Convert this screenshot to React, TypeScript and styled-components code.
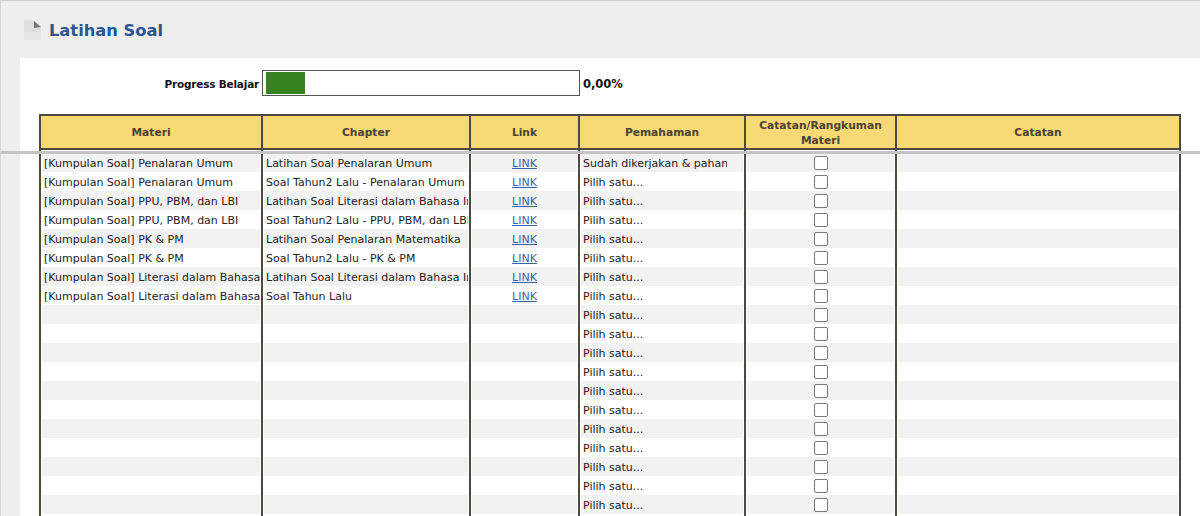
import styled, { createGlobalStyle } from "styled-components";

const GlobalStyle = createGlobalStyle`
  html, body {
    margin: 0;
    padding: 0;
    height: 516px;
    overflow: hidden;
    background: #eeeeee;
  }
`;

const font = `"DejaVu Sans", "Noto Sans", sans-serif`;

const Page = styled.div`
  position: relative;
  width: 1200px;
  height: 516px;
  overflow: hidden;
  box-sizing: border-box;
  background: #eeeeee;
  border-top: 1px solid #cfcfcf;
  border-left: 1px solid #d6d6d6;
  font-family: ${font};
  color: #222;
`;

const TitleBar = styled.div`
  height: 57px;
  box-sizing: border-box;
  padding: 18px 0 0 23px;
  display: flex;
  align-items: flex-start;
  gap: 8px;
`;

const Title = styled.h1`
  margin: 0;
  font-size: 16.3px;
  line-height: 24px;
  font-weight: 700;
  color: #2f5391;
`;

const Panel = styled.div`
  margin-left: 19px;
  background: #ffffff;
  padding: 12px 20px 0 19px;
  height: 500px;
`;

const ProgressRow = styled.div`
  display: flex;
  align-items: center;
  height: 26px;
  margin-bottom: 18px;
`;

const ProgressLabel = styled.div`
  width: 220px;
  padding-top: 2px;
  text-align: right;
  font-size: 10.5px;
  letter-spacing: -0.2px;
  font-weight: 700;
  color: #111;
  margin-right: 3px;
`;

const ProgressTrack = styled.div`
  width: 318px;
  height: 26px;
  box-sizing: border-box;
  border: 1px solid #555;
  padding: 1px 3px;
  background: #fff;
`;

const ProgressFill = styled.div`
  height: 100%;
  background: #38821f;
`;

const ProgressValue = styled.div`
  margin-left: 3px;
  padding-top: 2px;
  font-size: 11.5px;
  font-weight: 700;
  color: #111;
`;

const Table = styled.table`
  width: 1140px;
  table-layout: fixed;
  border-collapse: collapse;
  font-size: 11px;
`;

const Th = styled.th`
  height: 31px;
  padding: 1px 2px 0;
  background: #f9d976;
  border: 2px solid #4f4a40;
  color: #4a4335;
  font-size: 10.7px;
  line-height: 15px;
  font-weight: 700;
  text-align: center;
`;

const Row = styled.tr<{ $shaded: boolean }>`
  height: 19px;
  td {
    background: ${({ $shaded }) => ($shaded ? "#f2f2f2" : "#ffffff")};
  }
`;

const Td = styled.td<{ $center?: boolean }>`
  height: 19px;
  padding: 0 0 0 ${({ $center }) => ($center ? 0 : 3)}px;
  border-left: 2px solid #4f4a40;
  border-right: 2px solid #4f4a40;
  box-shadow: inset 1px 0 0 #fff, inset -1px 0 0 #fff;
  text-align: ${({ $center }) => ($center ? "center" : "left")};
  white-space: nowrap;
  overflow: hidden;
  line-height: 19px;
`;

// white gap between the header and the first row
const Spacer = styled.td`
  height: 3px;
  padding: 0;
  border-left: 2px solid #4f4a40;
  border-right: 2px solid #4f4a40;
`;

const Clip = styled.div<{ $width: number }>`
  width: ${({ $width }) => $width}px;
  overflow: hidden;
  position: relative;
  top: 1px;
`;

const LinkText = styled.a`
  color: #3a5fb0;
  text-decoration: underline;
  position: relative;
  top: 1px;
`;

const CheckBox = styled.span`
  display: block;
  width: 14px;
  height: 14px;
  box-sizing: border-box;
  margin: 0 auto;
  border: 1.5px solid #7a7a7a;
  border-radius: 2px;
  background: #fff;
`;

// grey line of the sticky header, lies over the table
const StickyLine = styled.div`
  position: absolute;
  left: -1px;
  right: 0;
  top: 150px;
  height: 3px;
  background: #c4c4c4;
`;

const DocIcon = () => (
  <svg width="17" height="20" viewBox="0 0 17 20" style={{ marginTop: 1 }}>
    <path d="M0 0h10l1 6h6v14H0z" fill="#dedede" />
    <path d="M10 1l7 6-7 1z" fill="#777777" />
    <path d="M0 12h17v8H0z" fill="#e6e6e6" />
  </svg>
);

const rows = [
  ["[Kumpulan Soal] Penalaran Umum", "Latihan Soal Penalaran Umum", "Sudah dikerjakan & paham"],
  ["[Kumpulan Soal] Penalaran Umum", "Soal Tahun2 Lalu - Penalaran Umum"],
  ["[Kumpulan Soal] PPU, PBM, dan LBI", "Latihan Soal Literasi dalam Bahasa Indonesia"],
  ["[Kumpulan Soal] PPU, PBM, dan LBI", "Soal Tahun2 Lalu - PPU, PBM, dan LBI"],
  ["[Kumpulan Soal] PK & PM", "Latihan Soal Penalaran Matematika"],
  ["[Kumpulan Soal] PK & PM", "Soal Tahun2 Lalu - PK & PM"],
  ["[Kumpulan Soal] Literasi dalam Bahasa", "Latihan Soal Literasi dalam Bahasa Indonesia"],
  ["[Kumpulan Soal] Literasi dalam Bahasa", "Soal Tahun Lalu"],
  ...Array.from({ length: 12 }, () => ["", ""]),
];

const columns = [
  { title: "Materi", width: 222 },
  { title: "Chapter", width: 208 },
  { title: "Link", width: 109 },
  { title: "Pemahaman", width: 166 },
  { title: "Catatan/Rangkuman Materi", width: 151 },
  { title: "Catatan", width: 284 },
];

const App = () => {
  return (
    <Page>
      <GlobalStyle />
      <TitleBar>
        <DocIcon />
        <Title>Latihan Soal</Title>
      </TitleBar>
      <Panel>
        <ProgressRow>
          <ProgressLabel>Progress Belajar</ProgressLabel>
          <ProgressTrack>
            <ProgressFill style={{ width: 39 }} />
          </ProgressTrack>
          <ProgressValue>0,00%</ProgressValue>
        </ProgressRow>
        <Table>
          <colgroup>
            {columns.map((c) => (
              <col key={c.title} width={c.width} />
            ))}
          </colgroup>
          <thead>
            <tr>
              {columns.map((c) => (
                <Th key={c.title}>{c.title}</Th>
              ))}
            </tr>
          </thead>
          <tbody>
            <tr>
              {columns.map((c) => (
                <Spacer key={c.title} />
              ))}
            </tr>
            {rows.map((r, i) => (
              <Row key={i} $shaded={i % 2 === 0}>
                <Td>
                  <Clip $width={216}>{r[0]}</Clip>
                </Td>
                <Td>
                  <Clip $width={202}>{r[1]}</Clip>
                </Td>
                <Td $center>{r[0] ? <LinkText href="#">LINK</LinkText> : null}</Td>
                <Td>
                  <Clip $width={144}>{r[2] || "Pilih satu..."}</Clip>
                </Td>
                <Td $center>
                  <CheckBox />
                </Td>
                <Td />
              </Row>
            ))}
          </tbody>
        </Table>
      </Panel>
      <StickyLine />
    </Page>
  );
};

export default App;
